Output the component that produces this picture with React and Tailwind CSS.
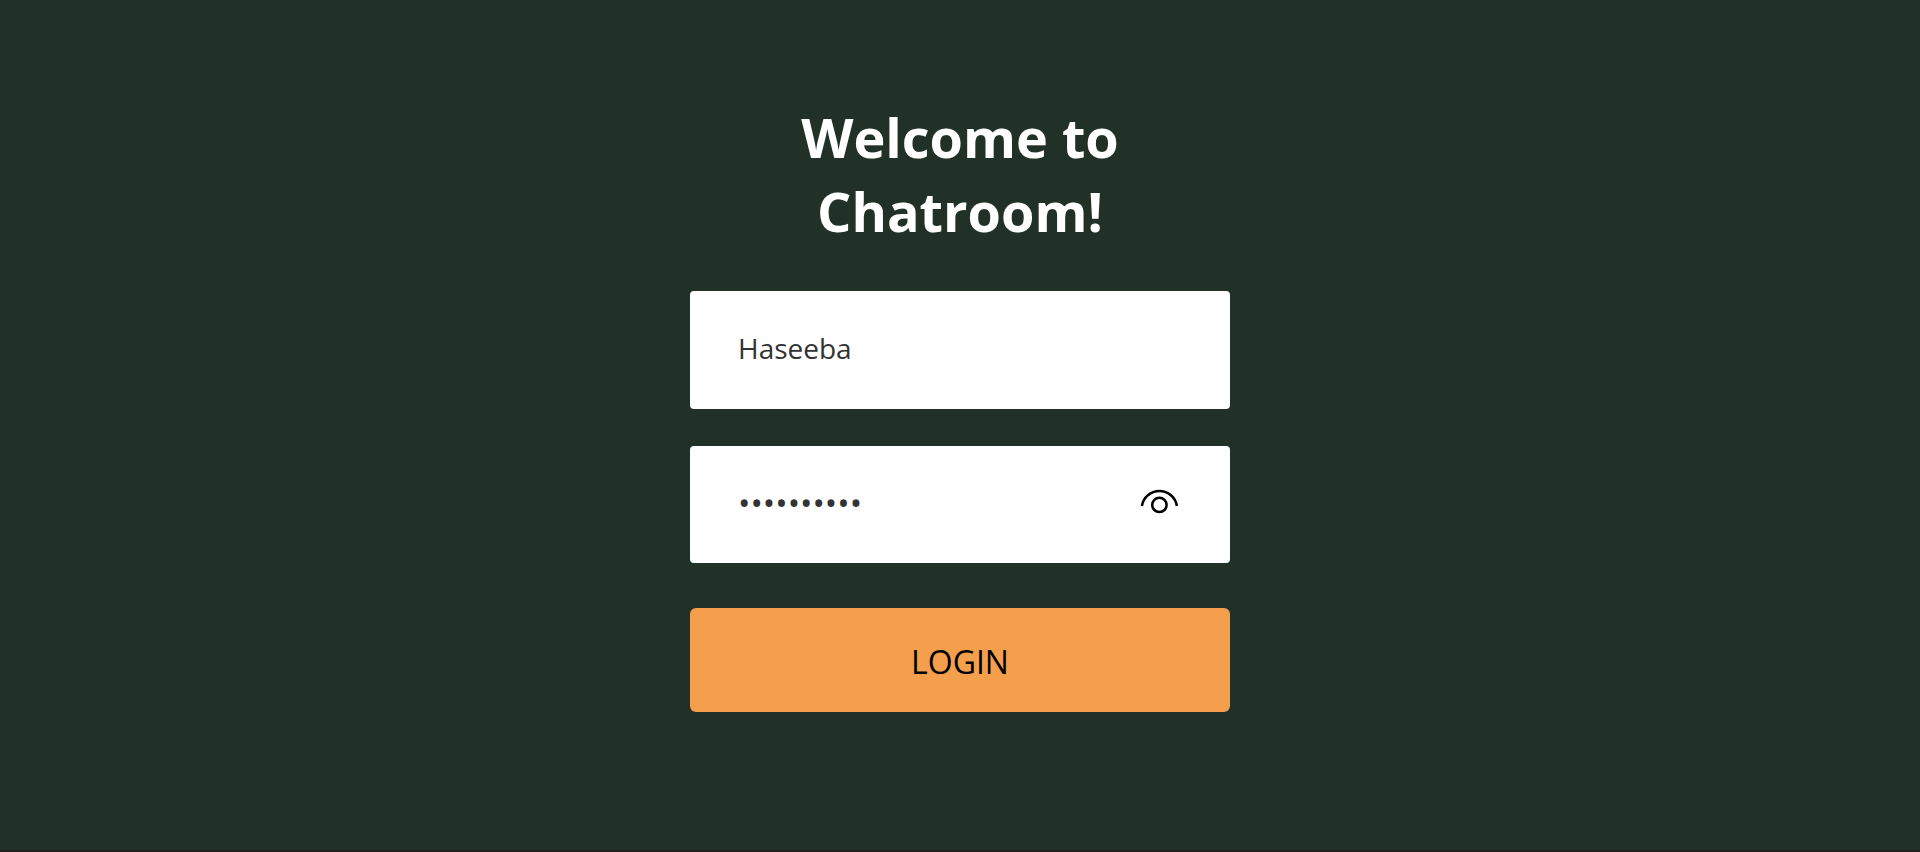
import { useState } from "react";

function EyeIcon() {
  return (
    <svg
      className="block h-[26px] w-[38px]"
      viewBox="0 0 38 26"
      fill="none"
      stroke="black"
      strokeWidth="2.5"
      aria-hidden="true"
    >
      <path d="M1.9 18A17.7 17.7 0 0 1 36.9 18" />
      <circle cx="19.4" cy="16.9" r="7.2" />
    </svg>
  );
}

const fieldClass =
  "block w-full rounded bg-white px-12 leading-[42px] text-[#333333] outline-none";

export default function App() {
  const [name, setName] = useState("Haseeba");
  const [password, setPassword] = useState("chatroom12");
  const [visible, setVisible] = useState(false);

  return (
    <main className="flex min-h-screen flex-col items-center border-b-2 border-[#221e20] bg-[#223128] pt-[100px] font-['Open_Sans',sans-serif]">
      <form
        className="flex w-full max-w-[540px] flex-col"
        onSubmit={(event) => event.preventDefault()}
      >
        <h1 className="text-center text-[54px] leading-[74px] font-bold text-white">
          Welcome to
          <br />
          Chatroom!
        </h1>

        <input
          type="text"
          aria-label="Username"
          className={`${fieldClass} mt-[43px] pt-9 pb-10 text-[28px]`}
          value={name}
          onChange={(event) => setName(event.target.value)}
        />

        <div className="relative mt-[37px]">
          <input
            type={visible ? "text" : "password"}
            aria-label="Password"
            className={`${fieldClass} pt-9 pb-[39px] text-[33px]`}
            value={password}
            onChange={(event) => setPassword(event.target.value)}
          />
          <button
            type="button"
            aria-label="Show password"
            className="absolute top-[42px] right-[52px]"
            onClick={() => setVisible(!visible)}
          >
            <EyeIcon />
          </button>
        </div>

        <button
          type="submit"
          className="mt-[45px] w-full rounded-md bg-[#f49f4c] pt-[30px] pb-[26px] text-[32px] leading-[48px] text-black"
        >
          LOGIN
        </button>
      </form>
    </main>
  );
}
